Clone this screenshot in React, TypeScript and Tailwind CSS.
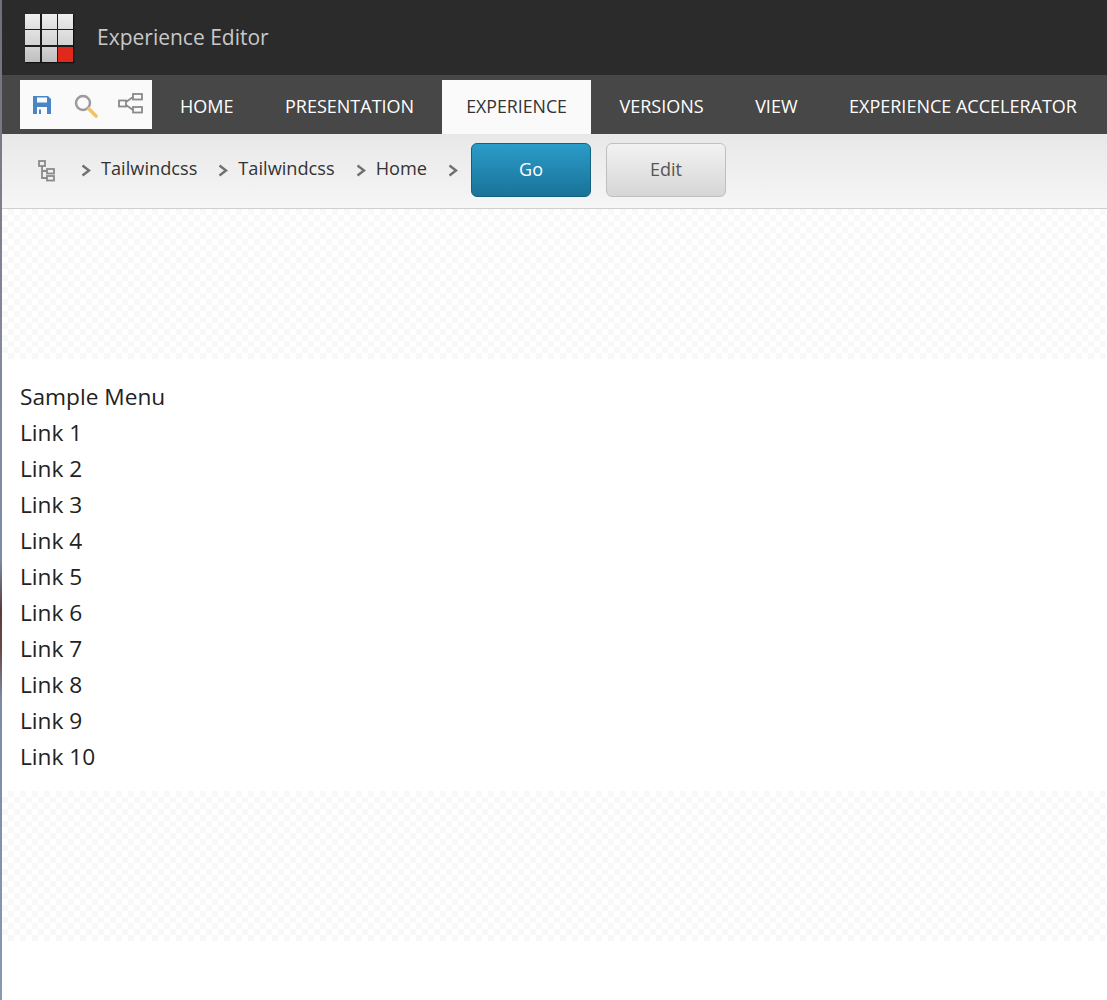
const tabs = ["HOME", "PRESENTATION", "EXPERIENCE", "VERSIONS", "VIEW", "EXPERIENCE ACCELERATOR"];
const crumbs = ["Tailwindcss", "Tailwindcss", "Home"];
const links = ["Sample Menu", "Link 1", "Link 2", "Link 3", "Link 4", "Link 5", "Link 6", "Link 7", "Link 8", "Link 9", "Link 10"];

const logoCells = [
  "from-[#f0f0f0] to-[#dedede]",
  "from-[#f0f0f0] to-[#dedede]",
  "from-[#f0f0f0] to-[#dedede]",
  "from-[#e2e2e2] to-[#d2d2d2]",
  "from-[#e2e2e2] to-[#d2d2d2]",
  "from-[#e2e2e2] to-[#d2d2d2]",
  "from-[#d2d2d2] to-[#bebebe]",
  "from-[#d2d2d2] to-[#bebebe]",
  "from-[#e0281c] to-[#e0281c]",
];

function Chevron() {
  return (
    <svg width="10" height="13" viewBox="0 0 10 13" className="mt-[2px] shrink-0">
      <path d="M1.5 1.5 L8 6.5 L1.5 11.5" fill="none" stroke="#707070" strokeWidth="2.4" />
    </svg>
  );
}

function Logo() {
  return (
    <div className="grid grid-cols-3 gap-[1.5px] bg-[#1c1c1c] shadow-[1px_1px_1px_#111]">
      {logoCells.map((cell, i) => (
        <div key={i} className={"h-[15px] w-[15px] bg-gradient-to-b " + cell} />
      ))}
    </div>
  );
}

function Placeholder() {
  return (
    <div className="h-[150px] bg-white bg-[conic-gradient(#f8f8f8_25%,#ffffff_0_50%,#f8f8f8_0_75%,#ffffff_0)] bg-[length:12px_12px]" />
  );
}

export default function App() {
  return (
    <div
      className="flex min-h-[1000px] bg-white text-[#222]"
      style={{ fontFamily: '"Open Sans", sans-serif' }}
    >
      <div className="w-[2px] shrink-0 bg-[linear-gradient(180deg,#70707a_0,#84889a_340px,#7c8ca6_560px,#5c3c38_610px,#6a4a48_650px,#7c8ca6_700px,#8a98b0_1000px)]" />
      <div className="min-w-0 flex-1">
        <header className="flex h-[75px] items-center bg-[#2b2b2b]">
          <div className="ml-[23px]">
            <Logo />
          </div>
          <span className="ml-[24px] text-[21px] text-[#c8c8c8]">Experience Editor</span>
        </header>

        <nav className="flex h-[59px] items-end bg-[#474747]">
          <div className="mb-[5px] ml-[18px] flex h-[49px] w-[132px] shrink-0 items-center bg-[#fafafa] pl-[13px]">
            <svg width="18" height="18" viewBox="0 0 18 18">
              <path d="M0 0h15l3 3v15H0z" fill="#4a86c5" />
              <rect x="4" y="1.5" width="10" height="5" fill="#fafafa" />
              <rect x="4" y="11" width="10" height="7" fill="#fafafa" />
              <rect x="6" y="13.5" width="2" height="4.5" fill="#4a86c5" />
            </svg>
            <svg width="24" height="24" viewBox="0 0 24 24" className="ml-[23px] mt-[3px]">
              <circle cx="9" cy="9" r="7" fill="none" stroke="#9a9a9a" strokeWidth="2.4" />
              <path d="M15 15l7 7" stroke="#f0c36a" strokeWidth="3.6" strokeLinecap="round" />
            </svg>
            <svg width="25" height="21" viewBox="0 0 25 21" className="ml-[20px] -mt-[2px]">
              <g fill="none" stroke="#8a8a8a" strokeWidth="1.8">
                <rect x="1" y="7.5" width="7" height="6" />
                <rect x="15" y="1" width="9" height="5.5" />
                <rect x="15" y="14" width="9" height="5.5" />
                <path d="M8 9l7-5M8 12l7 5" />
              </g>
            </svg>
          </div>
          <div className="ml-[2.25px] flex items-end">
            {tabs.map((t) => (
              <div
                key={t}
                className={
                  t === "EXPERIENCE"
                    ? "ml-[2px] mr-[2.5px] flex h-[54px] items-center bg-[#fafafa] px-[24.25px] pb-[2px] text-[17.75px] text-[#333]"
                    : "flex h-[54px] items-center whitespace-nowrap px-[25.75px] pb-[2px] text-[18px] font-medium text-white"
                }
              >
                {t}
              </div>
            ))}
          </div>
        </nav>

        <div className="flex h-[75px] items-center border-b border-[#cfcfcf] bg-gradient-to-b from-[#e8e8e8] to-[#f6f6f6] pb-[2px] pl-[36px]">
          <svg width="18" height="22" viewBox="0 0 18 22" className="mt-[2px] shrink-0">
            <g fill="none" stroke="#8a8a8a" strokeWidth="1.8">
              <rect x="1" y="1" width="6" height="5" />
              <rect x="9" y="9" width="7" height="4.5" />
              <rect x="9" y="16" width="7" height="4.5" />
              <path d="M4 6v12h5M4 11h5" />
            </g>
          </svg>
          <div className="ml-[25px] flex items-center text-[18.2px] text-[#333]">
            {crumbs.map((c, i) => (
              <div key={i} className="flex items-center">
                <Chevron />
                <span className="ml-[10px] mr-[21px] pb-[2px]">{c}</span>
              </div>
            ))}
            <Chevron />
          </div>
          <button className="ml-[13px] h-[54px] w-[120px] rounded-[6px] border border-[#14607f] bg-gradient-to-b from-[#2a9cc8] to-[#1a7399] pb-[2px] text-[18px] font-medium text-white">
            Go
          </button>
          <button className="ml-[15px] h-[54px] w-[120px] rounded-[6px] border border-[#bfbfbf] bg-gradient-to-b from-[#f2f2f2] to-[#d6d6d6] pb-[2px] text-[18px] text-[#555]">
            Edit
          </button>
        </div>

        <Placeholder />

        <div className="pb-[16px] pl-[18px] pt-[20px] text-[22.7px] leading-[36px] text-[#222]">
          {links.map((l) => (
            <div key={l}>{l}</div>
          ))}
        </div>

        <Placeholder />
      </div>
    </div>
  );
}
